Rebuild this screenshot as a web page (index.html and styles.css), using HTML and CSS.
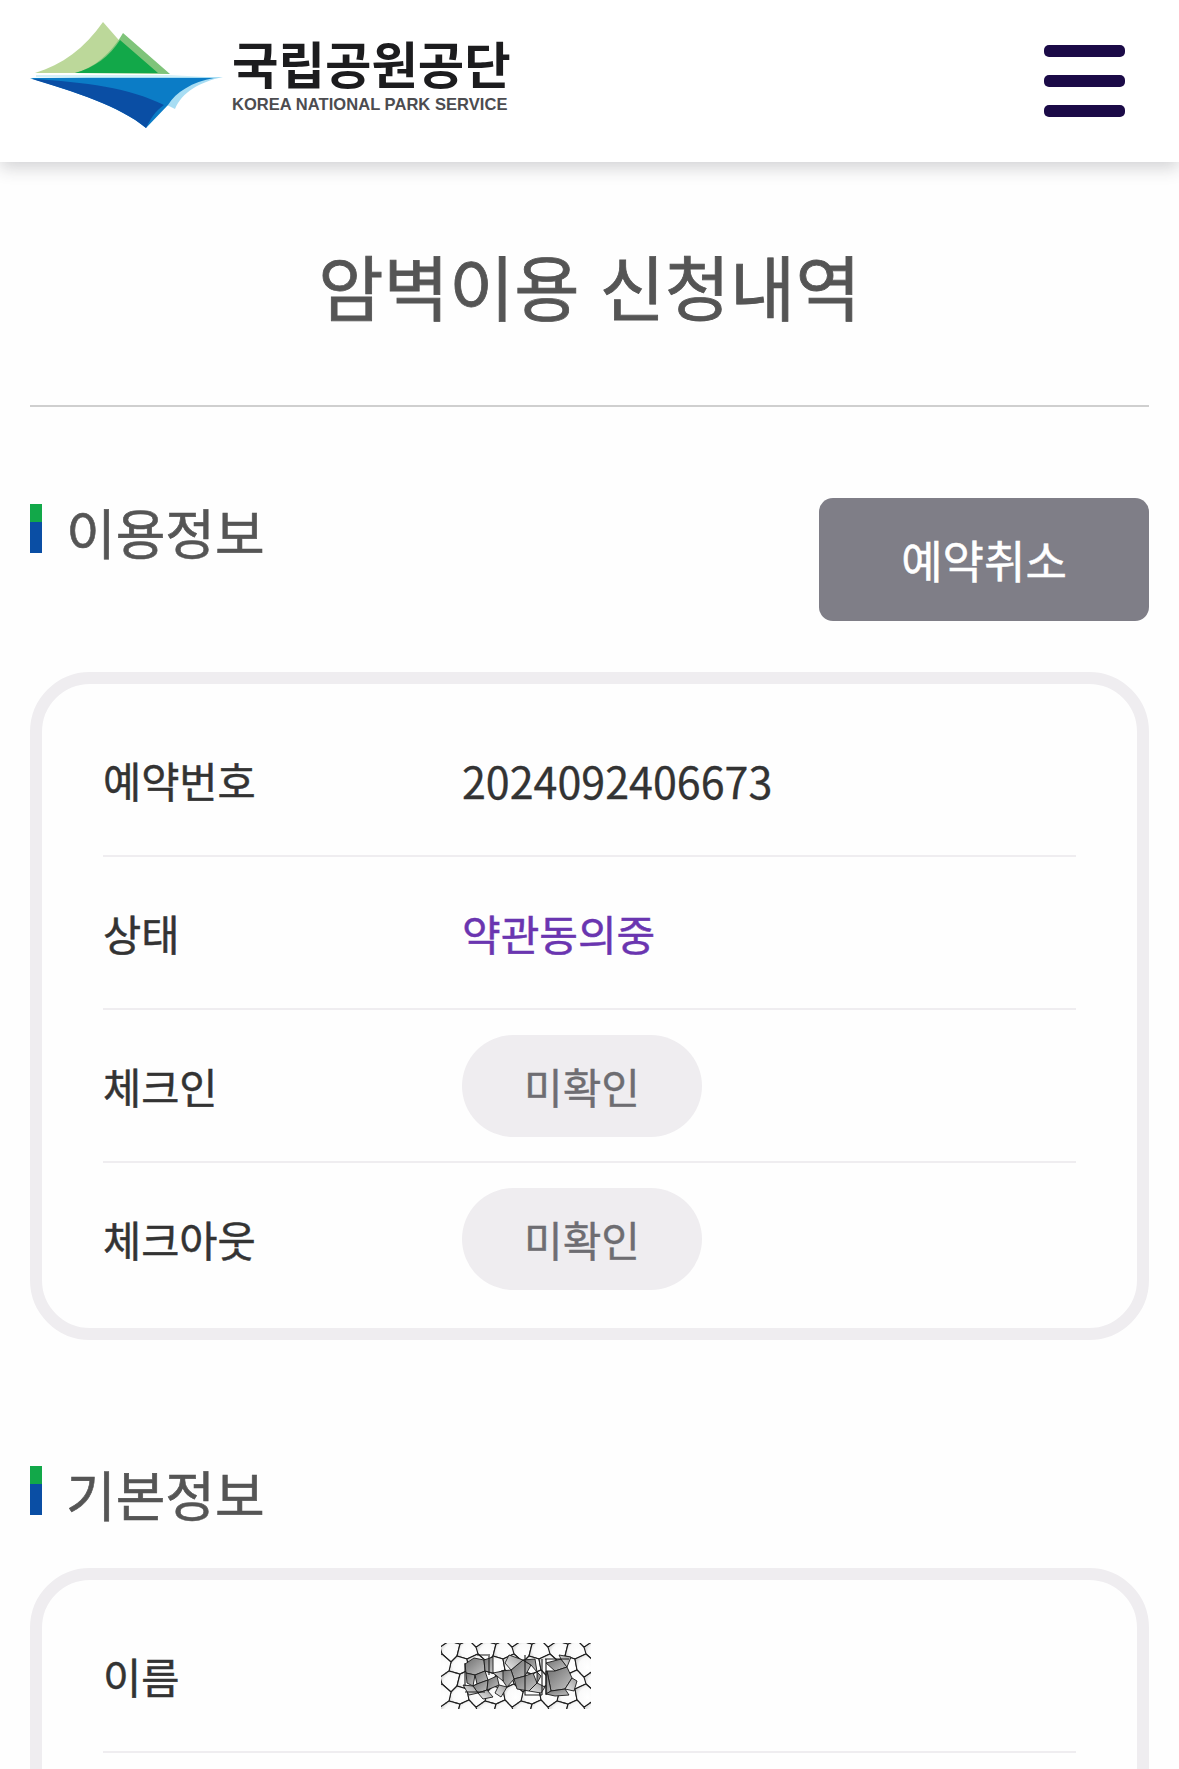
FILE: index.html
```html
<!DOCTYPE html>
<html lang="ko">
<head>
<meta charset="utf-8">
<title>암벽이용 신청내역</title>
<link rel="stylesheet" href="styles.css">
</head>
<body>
<div class="page">
  <header class="topbar">
    <div class="brand">
      <svg class="brand-mark" width="195" height="112" viewBox="30 20 195 112" aria-hidden="true">
        <path d="M35 73C62 65 85 48 103 22L124 46L100 73Z" fill="#bcd89a"/>
        <path d="M75 73C95 68 112 52 123 33L170 74Z" fill="#7fc47a"/>
        <path d="M75 73C94 68 110 56 120 40L158 73Z" fill="#12a849"/>
        <path d="M36 75H170L206 77H36Z" fill="#d4f0f8"/>
        <path d="M30 77H223C200 82 182 92 175 109L167 105C172 92 185 84 200 80Z" fill="#a8ddf3"/>
        <path d="M30 78H214C192 82 176 92 168 105L146 128C120 106 75 92 30 78Z" fill="#0b7cc6"/>
        <path d="M32 79C85 82 130 88 164 105C155 111 150 120 146 128C120 106 75 92 32 79Z" fill="#0a4ea4"/>
      </svg>
      <div class="brand-text">
        <span class="brand-ko">국립공원공단</span>
        <span class="brand-en">KOREA NATIONAL PARK SERVICE</span>
      </div>
    </div>
    <button class="menu" type="button" aria-label="메뉴"><span></span><span></span><span></span></button>
  </header>

  <main class="content">
    <h1 class="title">암벽이용 신청내역</h1>

    <section class="section-first">
      <div class="section-head">
        <h2 class="heading"><i class="accent"></i>이용정보</h2>
        <button class="cancel" type="button">예약취소</button>
      </div>
      <div class="card">
        <div class="row"><span class="label">예약번호</span><span class="value">2024092406673</span></div>
        <div class="row"><span class="label">상태</span><span class="value-status">약관동의중</span></div>
        <div class="row"><span class="label">체크인</span><span class="pill">미확인</span></div>
        <div class="row"><span class="label">체크아웃</span><span class="pill">미확인</span></div>
      </div>
    </section>

    <section class="section-next">
      <div class="section-head">
        <h2 class="heading"><i class="accent"></i>기본정보</h2>
      </div>
      <div class="card">
        <div class="row">
          <span class="label">이름</span>
          <svg class="mask" width="150" height="66" viewBox="0 0 150 66" aria-hidden="true">
            <defs>
              <radialGradient id="cellshade" cx=".62" cy=".58" r=".72">
                <stop offset="0" stop-color="#ffffff"/><stop offset=".6" stop-color="#fafafa"/><stop offset="1" stop-color="#c2c2c2"/>
              </radialGradient>
              <linearGradient id="darkshade" x1="0" y1="0" x2="1" y2="1">
                <stop offset="0" stop-color="#6e6e6e"/><stop offset="1" stop-color="#c4c4c4"/>
              </linearGradient>
              <linearGradient id="midshade" x1="1" y1="0" x2="0" y2="1">
                <stop offset="0" stop-color="#9a9a9a"/><stop offset="1" stop-color="#ececec"/>
              </linearGradient>
              <polygon id="cell-a" points="8,-2 19,1 16,13 10,19 1,11 -1,4"/>
              <polygon id="cell-b" points="28,-3 35,4 37,11 26,16 16,13 19,1"/>
              <polygon id="cell-c" points="16,13 26,16 28,27 19,31 8,28 10,19"/>
              <polygon id="cell-d" points="1,11 10,19 8,28 -1,34 -8,27 -10,16"/>
              <pattern id="cells" width="36" height="30" patternUnits="userSpaceOnUse">
                <g fill="url(#cellshade)" stroke="#1a1a1a" stroke-width="1.1">
                  <use href="#cell-a"/><use href="#cell-b"/><use href="#cell-c"/><use href="#cell-d"/>
                  <use href="#cell-d" x="36"/>
                  <use href="#cell-c" y="-30"/><use href="#cell-d" y="-30"/><use href="#cell-d" x="36" y="-30"/>
                  <use href="#cell-a" y="30"/><use href="#cell-b" y="30"/>
                </g>
              </pattern>
            </defs>
            <rect width="150" height="66" fill="url(#cells)"/>
            <g fill="url(#darkshade)" stroke="#1a1a1a" stroke-width=".9">
              <path d="M24 21L33 15L43 17L44 28L34 32L25 30Z"/>
              <path d="M43 17L52 14L52 30L44 28Z"/>
              <path d="M25 30L34 32L32 43L26 40Z"/>
              <path d="M34 32L44 28L47 37L36 41Z"/>
              <path d="M32 43L36 41L47 37L46 47L37 50Z"/>
              <path d="M47 37L56 33L58 42L46 47Z"/>
              <path d="M70 27L82 17L90 22L84 33L73 36Z"/>
              <path d="M82 17L94 16L96 29L90 22Z"/>
              <path d="M73 36L84 33L92 30L96 40L88 48L76 46Z"/>
              <path d="M60 28L70 27L73 36L66 44L62 38Z"/>
              <path d="M96 29L100 33L96 40Z"/>
              <path d="M105 20L120 16L126 24L114 28Z"/>
              <path d="M106 28L114 28L126 24L131 35L124 46L110 48Z"/>
              <path d="M105 28L106 28L110 48L105 51Z"/>
              <path d="M105 51L110 48L124 46L128 52L114 53Z"/>
            </g>
            <g fill="url(#midshade)" stroke="#1a1a1a" stroke-width=".9">
              <path d="M22 42L32 43L37 50L28 52Z"/>
              <path d="M37 50L46 47L52 54L42 56Z"/>
              <path d="M52 30L62 28L62 38L56 33Z"/>
              <path d="M58 42L66 44L60 54L54 50Z"/>
              <path d="M88 48L96 40L104 44L100 50Z"/>
              <path d="M131 35L136 38L133 48L124 46Z"/>
              <path d="M118 12L130 14L126 24L120 16Z"/>
              <path d="M68 12L82 17L70 27L64 20Z"/>
            </g>
            <path d="M47 12H36M48 11V32M24 20V43M24 49H44M84 12V52H101M101 16V52M104 16H128M105 16V52" fill="none" stroke="#1a1a1a" stroke-width="1.1"/>
          </svg>
        </div>
        <div class="row"></div>
      </div>
    </section>
  </main>
</div>
</body>
</html>
```

FILE: styles.css
```css
* { box-sizing: border-box; }
html, body { margin: 0; padding: 0; }
body { background: #fefefe; color: #333; font-family: "Noto Sans CJK KR", "Noto Sans", sans-serif; }
.page { height: 1769px; overflow: hidden; }

.topbar { height: 162px; background: #fff; display: flex; align-items: flex-start; justify-content: space-between; padding: 20px 54px 0 30px; box-shadow: 0 6px 16px rgba(40, 40, 50, .2); position: relative; }
.brand { display: flex; align-items: flex-start; }
.brand-mark { display: block; flex: none; margin-right: 7px; }
.brand-text { display: flex; flex-direction: column; padding-top: 15px; }
.brand-ko { font-size: 50.5px; line-height: 54px; font-weight: 700; color: #1c1c1e; white-space: nowrap; }
.brand-en { margin-top: 6px; font-family: "Liberation Sans", sans-serif; font-size: 16.5px; line-height: 18px; font-weight: 700; color: #4c4c50; white-space: nowrap; letter-spacing: .05px; }
.menu { border: 0; background: none; padding: 0; margin-top: 25px; width: 81px; height: 72px; display: flex; flex-direction: column; justify-content: space-between; }
.menu span { display: block; height: 12px; border-radius: 5px; background: #1b0a47; }

.content { padding: 0 30px; }
.title { margin: 0; height: 245px; padding-top: 80px; border-bottom: 2px solid #cfcfcf; text-align: center; font-size: 71px; line-height: 84px; font-weight: 400; -webkit-text-stroke: .8px #555; color: #555; }

.section-first { margin-top: 91px; }
.section-next { margin-top: 126px; }
.section-head { display: flex; align-items: flex-start; justify-content: space-between; }
.section-first .section-head { margin-bottom: 51px; }
.section-next .section-head { margin-bottom: 46px; }
.heading { margin: 6px 0 0; display: flex; align-items: flex-start; height: 56px; font-size: 54px; line-height: 56px; font-weight: 400; -webkit-text-stroke: .6px #555; color: #555; }
.section-next .heading { margin-top: 0; }
.accent { display: block; width: 12px; height: 49px; margin-right: 24px; background: linear-gradient(#12a849 0, #12a849 18px, #0a4ea4 18px); }
.cancel { width: 330px; height: 123px; border: 0; border-radius: 14px; background: #7f7e87; color: #fff; -webkit-text-stroke: .5px #fff; font: 400 45px/1 "Noto Sans CJK KR", "Noto Sans", sans-serif; }

.card { border: 12px solid #efedf0; border-radius: 60px; background: #fefefe; padding: 20px 61px 0; }
.section-first .card { padding-bottom: 12px; }
.row { height: 153px; display: flex; align-items: center; border-bottom: 2px solid #efedf0; }
.section-first .row:last-child { border-bottom-color: transparent; }
.label { flex: none; width: 359px; font-size: 41.5px; font-weight: 400; -webkit-text-stroke: .5px #333; color: #333; }
.value { font-size: 43px; -webkit-text-stroke: .3px #333; color: #333; }
.value-status { font-size: 42px; font-weight: 400; -webkit-text-stroke: .5px #6a35b0; color: #6a35b0; }
.pill { width: 240px; height: 102px; border-radius: 51px; background: #efedf0; color: #6e6d72; font-size: 42px; -webkit-text-stroke: .4px #6e6d72; display: flex; align-items: center; justify-content: center; }
.mask { display: block; margin-left: -21px; }
```
